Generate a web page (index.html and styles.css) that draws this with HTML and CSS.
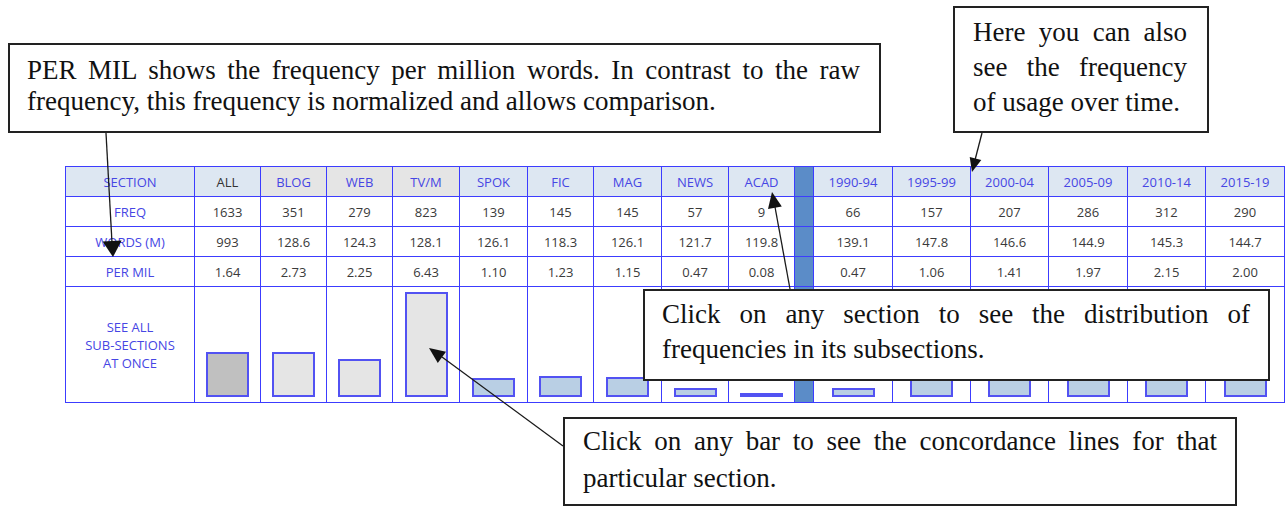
FILE: index.html
```html
<!DOCTYPE html>
<html lang="en">
<head>
<meta charset="utf-8">
<title>Frequency chart annotated</title>
<link rel="stylesheet" href="styles.css">
</head>
<body>
<div class="page">
  <div class="top">
    <div class="callout c-permil">PER MIL shows the frequency per million words. In contrast to the raw frequency, this frequency is normalized and allows comparison.</div>
    <div class="callout c-time">Here you can also see the frequency of usage over time.</div>
  </div>

  <table class="freq">
    <colgroup>
      <col class="w-label">
      <col class="w66"><col class="w66"><col class="w66"><col class="w67"><col class="w68"><col class="w66"><col class="w68"><col class="w67"><col class="w66">
      <col class="w-sep">
      <col class="w79"><col class="w78"><col class="w78"><col class="w79"><col class="w78"><col class="w79">
    </colgroup>
    <tr class="head">
      <td class="lbl">SECTION</td>
      <td class="dark">ALL</td>
      <td class="grey">BLOG</td>
      <td class="grey">WEB</td>
      <td class="grey">TV/M</td>
      <td>SPOK</td><td>FIC</td><td>MAG</td><td>NEWS</td><td>ACAD</td>
      <td class="sep"></td>
      <td>1990-94</td><td>1995-99</td><td>2000-04</td><td>2005-09</td><td>2010-14</td><td>2015-19</td>
    </tr>
    <tr>
      <td class="lbl">FREQ</td>
      <td>1633</td><td>351</td><td>279</td><td>823</td><td>139</td><td>145</td><td>145</td><td>57</td><td>9</td>
      <td class="sep"></td>
      <td>66</td><td>157</td><td>207</td><td>286</td><td>312</td><td>290</td>
    </tr>
    <tr>
      <td class="lbl">WORDS (M)</td>
      <td>993</td><td>128.6</td><td>124.3</td><td>128.1</td><td>126.1</td><td>118.3</td><td>126.1</td><td>121.7</td><td>119.8</td>
      <td class="sep"></td>
      <td>139.1</td><td>147.8</td><td>146.6</td><td>144.9</td><td>145.3</td><td>144.7</td>
    </tr>
    <tr>
      <td class="lbl">PER MIL</td>
      <td>1.64</td><td>2.73</td><td>2.25</td><td>6.43</td><td>1.10</td><td>1.23</td><td>1.15</td><td>0.47</td><td>0.08</td>
      <td class="sep"></td>
      <td>0.47</td><td>1.06</td><td>1.41</td><td>1.97</td><td>2.15</td><td>2.00</td>
    </tr>
    <tr class="bars">
      <td class="lbl see">SEE ALL<br>SUB-SECTIONS<br>AT ONCE</td>
      <td><div class="bar bar-all" style="height:45px"></div></td>
      <td><div class="bar bar-grey" style="height:45px"></div></td>
      <td><div class="bar bar-grey" style="height:38px"></div></td>
      <td><div class="bar bar-grey" style="height:105px"></div></td>
      <td><div class="bar" style="height:19px"></div></td>
      <td><div class="bar" style="height:21px"></div></td>
      <td><div class="bar" style="height:20px"></div></td>
      <td><div class="bar" style="height:9px"></div></td>
      <td><div class="bar" style="height:4px"></div></td>
      <td class="sep"></td>
      <td><div class="bar" style="height:9px"></div></td>
      <td><div class="bar" style="height:18px"></div></td>
      <td><div class="bar" style="height:24px"></div></td>
      <td><div class="bar" style="height:33px"></div></td>
      <td><div class="bar" style="height:36px"></div></td>
      <td><div class="bar" style="height:33px"></div></td>
    </tr>
  </table>

  <div class="callout c-bar">Click on any bar to see the concordance lines for that particular section.</div>

  <div class="callout c-section">Click on any section to see the distribution of frequencies in its subsections.</div>

  <svg class="arrows" width="1287" height="506" viewBox="0 0 1287 506" aria-hidden="true">
    <g class="arrow-line">
      <line x1="106" y1="133" x2="112" y2="243"/>
      <line x1="982" y1="133" x2="975" y2="160"/>
      <line x1="790" y1="289" x2="775" y2="207"/>
      <line x1="563" y1="446" x2="442" y2="357"/>
    </g>
    <g class="arrow-head">
      <polygon points="113,257 121.6,240.5 102.6,241.5"/>
      <polygon points="972,172 981.3,159.9 969.7,156.9"/>
      <polygon points="772,192 781.8,206.4 768,209"/>
      <polygon points="429,348 446,351.8 437.8,363"/>
    </g>
  </svg>
</div>
</body>
</html>
```

FILE: styles.css
```css
html, body {
  margin: 0;
  padding: 0;
  background: #ffffff;
}

.page {
  position: relative;
  width: 1287px;
  height: 506px;
  overflow: hidden;
  background: #ffffff;
}

/* ---------- callouts ---------- */
.top {
  display: flex;
  align-items: flex-end;
  gap: 72px;
  height: 133px;
  padding-left: 8px;
}

.callout {
  box-sizing: border-box;
  border: 2px solid #222222;
  background: #ffffff;
  font-family: "Liberation Serif", "Times New Roman", serif;
  font-size: 27px;
  color: #111111;
  text-align: justify;
}

.c-permil {
  width: 873px;
  height: 90px;
  padding: 10px 19px 0 17px;
  line-height: 31px;
}

.c-time {
  width: 256px;
  height: 127px;
  padding: 7px 20px 0 18px;
  line-height: 35px;
}

.c-bar {
  width: 674px;
  height: 89px;
  margin: 14px 0 0 563px;
  padding: 4px 18px 0 18px;
  line-height: 37px;
}

.c-section {
  position: absolute;
  left: 643px;
  top: 289px;
  width: 627px;
  height: 92px;
  padding: 6px 18px 0 17px;
  line-height: 35px;
}

/* ---------- table ---------- */
.freq {
  margin: 33px 0 0 65px;
  border-collapse: collapse;
  table-layout: fixed;
  width: 1220px;
  font-family: "Open Sans", "DejaVu Sans", sans-serif;
  font-size: 13px;
  color: #3a3a3a;
}

.w-label { width: 129px; }
.w66 { width: 66px; }
.w67 { width: 67px; }
.w68 { width: 68px; }
.w-sep { width: 19px; }
.w78 { width: 78px; }
.w79 { width: 79px; }

.freq tr { height: 30px; }
.freq tr.bars { height: 116px; }

.freq td {
  border: 1px solid #3c3cff;
  padding: 0;
  text-align: center;
  vertical-align: middle;
  white-space: nowrap;
}

.freq .head td {
  background: #dde7f2;
  color: #4646e4;
}

.freq .head td.dark { color: #333333; }
.freq .head td.grey { background: #e5e5e5; }

.freq td.lbl { color: #4646e4; }
.freq td.see { line-height: 18px; }

.freq td.sep,
.freq .head td.sep {
  background: #5b8cc8;
}

.freq .bars td {
  vertical-align: bottom;
  padding-bottom: 5px;
}

.freq .bars td.lbl,
.freq .bars td.sep {
  vertical-align: middle;
  padding-bottom: 0;
}

.bar {
  box-sizing: border-box;
  width: 43px;
  margin: 0 auto;
  border: 2px solid #5252f2;
  background: #b9cfe4;
}

.bar-all { background: #c0c0c0; }
.bar-grey { background: #e5e5e5; }

/* ---------- arrows ---------- */
.arrows {
  position: absolute;
  left: 0;
  top: 0;
  pointer-events: none;
}

.arrow-line line {
  stroke: #1a1a1a;
  stroke-width: 1.3;
}

.arrow-head polygon {
  fill: #111111;
}
```
